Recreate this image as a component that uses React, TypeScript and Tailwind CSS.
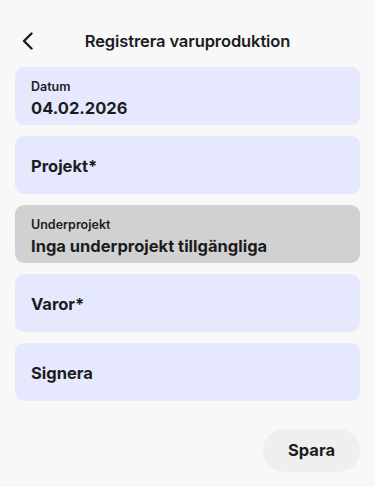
import React from "react";

function Field({ label, value, gray }: { label?: string; value: string; gray?: boolean }) {
  return (
    <div
      className={`h-[57.5px] rounded-[9px] px-4 flex flex-col ${label ? "pt-[12px]" : "justify-center"} ${gray ? "bg-[#d1d1d1]" : "bg-[#e6e9fe]"}`}
    >
      {label && <div className="text-[12.5px] font-semibold leading-[16px] text-[#1c1c1e]">{label}</div>}
      <div className={`font-[650] text-[#1c1c1e] text-[16.5px] leading-[22px] ${label ? "mt-[2px]" : "pt-[3px]"}`}>{value}</div>
    </div>
  );
}

export default function App() {
  return (
    <div className="w-[375px] h-[487px] bg-[#f8f8f8] overflow-hidden" style={{ fontFamily: "Inter, 'Noto Sans', sans-serif" }}>
      <div className="relative h-[67px] flex items-center justify-center pt-[16px]">
        <button className="absolute left-[19px] top-[31px] w-[16px] h-[20px] flex items-center justify-center">
          <svg width="14" height="18" viewBox="0 0 14 18" fill="none">
            <path d="M11.5 1.5 L4 9 L11.5 16.5" stroke="#1c1c1e" strokeWidth="2.4" strokeLinecap="round" strokeLinejoin="round" />
          </svg>
        </button>
        <h1 className="text-[16.5px] font-semibold text-[#1c1c1e] tracking-[-0.1px]">Registrera varuproduktion</h1>
      </div>
      <div className="px-[15px] flex flex-col gap-[11.5px]">
        <Field label="Datum" value="04.02.2026" />
        <Field value="Projekt*" />
        <Field label="Underprojekt" value="Inga underprojekt tillgängliga" gray />
        <Field value="Varor*" />
        <Field value="Signera" />
      </div>
      <div className="flex justify-end px-[15px] mt-[28px]">
        <button className="w-[97px] h-[43px] rounded-full bg-[#efefef] text-[16.5px] font-[650] text-[#1c1c1e]">Spara</button>
      </div>
    </div>
  );
}
